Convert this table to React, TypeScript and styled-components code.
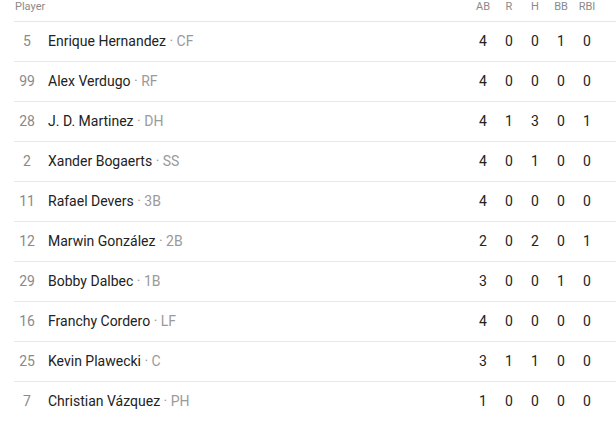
import React from "react";
import styled, { createGlobalStyle } from "styled-components";

const Global = createGlobalStyle`
  html, body { margin: 0; padding: 0; background: #ffffff; overflow: hidden; }
  body { font-family: Roboto, "Liberation Sans", sans-serif; }
`;

const Wrap = styled.div`
  padding-left: 14px;
`;

const Table = styled.table`
  border-collapse: collapse;
  width: 602px;
  table-layout: fixed;
`;

const HeadCell = styled.th<{ $align?: "left" | "center" }>`
  height: 21px;
  padding: 0 0 0 ${(p) => (p.$align === "left" ? "1px" : "0")};
  font-size: 11px;
  line-height: 13px;
  font-weight: 400;
  color: #8a8a8a;
  text-align: ${(p) => p.$align ?? "center"};
  vertical-align: top;
  border-bottom: 1px solid #e6e6e6;
`;

const Row = styled.tr`
  height: 40px;
  border-bottom: 1px solid #e8e8e8;
  &:last-child { border-bottom: none; }
`;

const NumCell = styled.td`
  padding: 0 0 2px;
  text-align: center;
  font-size: 14px;
  line-height: 16px;
  color: #8a8a8a;
`;

const NameCell = styled.td`
  padding: 0 0 2px 8px;
  font-size: 14px;
  line-height: 16px;
  color: #222222;
  white-space: nowrap;
`;

const Pos = styled.span`
  color: #9a9a9a;
`;

const StatCell = styled.td`
  padding: 0 0 2px;
  text-align: center;
  font-size: 14px;
  line-height: 16px;
  color: #222222;
`;

const players = [
  { n: "5", name: "Enrique Hernandez", pos: "CF", s: [4, 0, 0, 1, 0] },
  { n: "99", name: "Alex Verdugo", pos: "RF", s: [4, 0, 0, 0, 0] },
  { n: "28", name: "J. D. Martinez", pos: "DH", s: [4, 1, 3, 0, 1] },
  { n: "2", name: "Xander Bogaerts", pos: "SS", s: [4, 0, 1, 0, 0] },
  { n: "11", name: "Rafael Devers", pos: "3B", s: [4, 0, 0, 0, 0] },
  { n: "12", name: "Marwin González", pos: "2B", s: [2, 0, 2, 0, 1] },
  { n: "29", name: "Bobby Dalbec", pos: "1B", s: [3, 0, 0, 1, 0] },
  { n: "16", name: "Franchy Cordero", pos: "LF", s: [4, 0, 0, 0, 0] },
  { n: "25", name: "Kevin Plawecki", pos: "C", s: [3, 1, 1, 0, 0] },
  { n: "7", name: "Christian Vázquez", pos: "PH", s: [1, 0, 0, 0, 0] },
];

const stats = ["AB", "R", "H", "BB", "RBI"];

export default function App() {
  return (
    <Wrap>
      <Global />
      <Table>
        <colgroup>
          <col style={{ width: 26 }} />
          <col />
          {stats.map((s) => (
            <col key={s} style={{ width: 26 }} />
          ))}
          <col style={{ width: 16 }} />
        </colgroup>
        <thead>
          <tr>
            <HeadCell $align="left" colSpan={2}>Player</HeadCell>
            {stats.map((s) => (
              <HeadCell key={s}>{s}</HeadCell>
            ))}
            <HeadCell />
          </tr>
        </thead>
        <tbody>
          {players.map((p) => (
            <Row key={p.n}>
              <NumCell>{p.n}</NumCell>
              <NameCell>
                {p.name} <Pos>· {p.pos}</Pos>
              </NameCell>
              {p.s.map((v, i) => (
                <StatCell key={i}>{v}</StatCell>
              ))}
              <StatCell />
            </Row>
          ))}
        </tbody>
      </Table>
    </Wrap>
  );
}
